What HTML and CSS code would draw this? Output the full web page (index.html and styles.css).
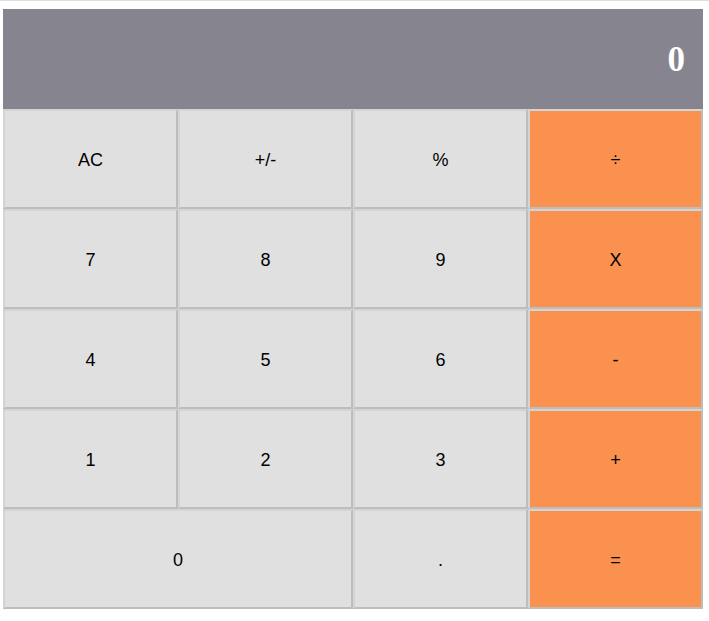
FILE: index.html
```html
<!DOCTYPE html>
<html>
<head>
<meta charset="utf-8">
<title>Calculator</title>
<link rel="stylesheet" href="styles.css">
</head>
<body>
<div class="topline"></div>
<div class="calc">
  <div class="display"><span class="value">0</span></div>
  <div class="keys">
    <button class="key">AC</button>
    <button class="key">+/-</button>
    <button class="key">%</button>
    <button class="key op">÷</button>
    <button class="key">7</button>
    <button class="key">8</button>
    <button class="key">9</button>
    <button class="key op">X</button>
    <button class="key">4</button>
    <button class="key">5</button>
    <button class="key">6</button>
    <button class="key op">-</button>
    <button class="key">1</button>
    <button class="key">2</button>
    <button class="key">3</button>
    <button class="key op">+</button>
    <button class="key wide">0</button>
    <button class="key">.</button>
    <button class="key op">=</button>
  </div>
</div>
</body>
</html>
```

FILE: styles.css
```css
html, body {
  margin: 0;
  padding: 0;
  background: #ffffff;
}
.topline {
  height: 1px;
  background: #dedede;
}
.calc {
  width: 700px;
  margin: 8px 0 0 3px;
  display: flex;
  flex-direction: column;
}
.display {
  height: 100px;
  background: #86858f;
  display: flex;
  align-items: center;
  justify-content: flex-end;
  padding-right: 18px;
  box-sizing: border-box;
}
.value {
  color: #ffffff;
  font-family: "Liberation Serif", "Times New Roman", serif;
  font-weight: bold;
  font-size: 35px;
  line-height: 1;
}
.keys {
  display: grid;
  grid-template-columns: repeat(4, 175px);
  grid-auto-rows: 100px;
}
.key {
  margin: 0;
  padding: 2px 0 0 0;
  background: #e0e0e0;
  color: #000000;
  font-family: "Liberation Sans", Arial, Helvetica, sans-serif;
  font-size: 18px;
  border-width: 2px;
  border-style: solid;
  border-color: #d4d4d4 #bdbdbd #bdbdbd #d4d4d4;
  box-sizing: border-box;
  display: flex;
  align-items: center;
  justify-content: center;
}
.key.op {
  background: #fa914f;
}
.key.wide {
  grid-column: span 2;
}
```
